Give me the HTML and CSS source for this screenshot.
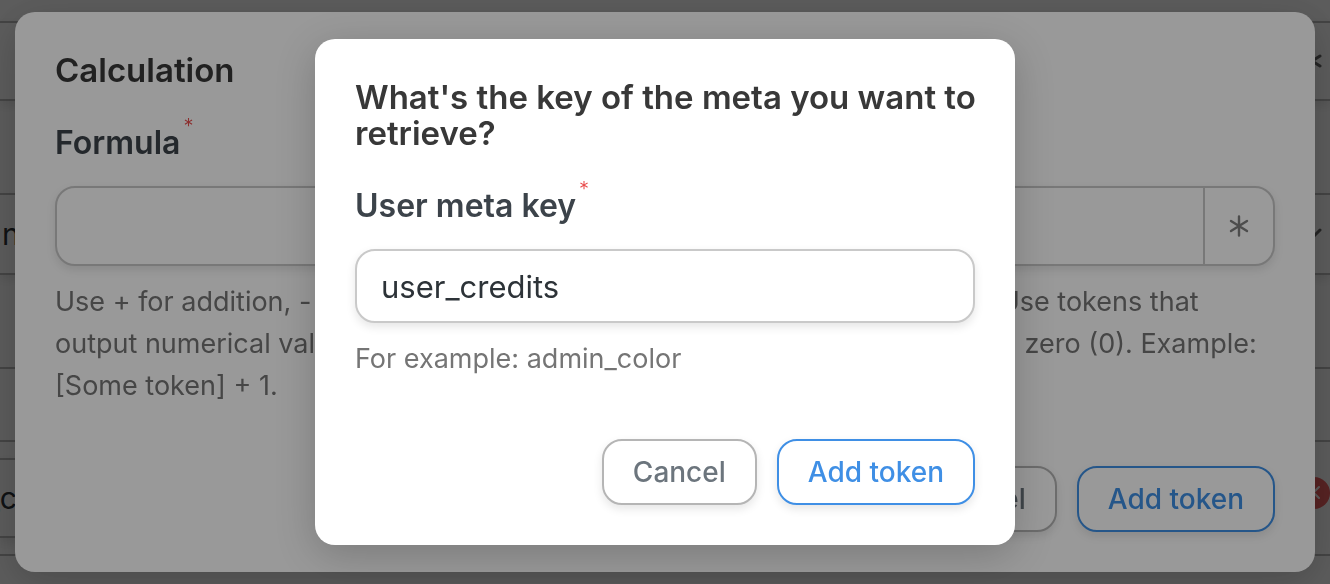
FILE: index.html
```html
<!DOCTYPE html>
<html lang="en">
<head>
	<meta charset="UTF-8">
	<title>Calculation</title>
	<meta name="viewport" content="width=device-width, initial-scale=1.0">
	<link rel="stylesheet" href="styles.css">
</head>
<body>
	<main class="page">
		<div class="page-field">
			<span></span>
			<svg class="page-icon" viewBox="0 0 20 20" aria-hidden="true"><path d="M10 1v18M2 5l16 10M2 15L18 5"/></svg>
		</div>
		<div class="page-field page-select">
			<span>n</span>
			<svg class="page-icon" viewBox="0 0 20 20" aria-hidden="true"><path d="M2 6l8 8 8-8"/></svg>
		</div>
		<div class="page-section"></div>
		<div class="page-row">
			<div class="page-value">_c</div>
			<button class="remove" type="button" aria-label="Remove">
				<svg viewBox="0 0 32 32" aria-hidden="true"><path d="M10 10l11 11M21 10L10 21"/></svg>
			</button>
		</div>
	</main>

	<div class="overlay">
		<section class="modal modal-large" role="dialog" aria-labelledby="calc-title">
			<h2 class="modal-title" id="calc-title">Calculation</h2>
			<label class="label" for="formula">Formula <span class="required">*</span></label>
			<div class="token-field">
				<input class="token-input" id="formula" type="text">
				<button class="token-button" type="button" aria-label="Insert token">
					<svg viewBox="0 0 20 22" aria-hidden="true"><path d="M10 1.500v19M2 6l16 10M2 16L18 6"/></svg>
				</button>
			</div>
			<p class="help">Use + for addition, - for subtraction, * for multiplication, and / for division. Use tokens that output numerical values. Any non-numeric values will also be replaced with zero (0). Example: [Some token] + 1.</p>
			<div class="actions">
				<button class="button" type="button">Cancel</button>
				<button class="button button-primary" type="button">Add token</button>
			</div>
		</section>
	</div>

	<div class="overlay">
		<section class="modal" role="dialog" aria-labelledby="meta-title">
			<h2 class="modal-title" id="meta-title">What's the key of the meta you want to retrieve?</h2>
			<label class="label" for="meta-key">User meta key <span class="required">*</span></label>
			<input class="input" id="meta-key" type="text" value="user_credits">
			<p class="help">For example: admin_color</p>
			<div class="actions">
				<button class="button" type="button">Cancel</button>
				<button class="button button-primary" type="button">Add token</button>
			</div>
		</section>
	</div>
</body>
</html>
```
FILE: styles.css
```css
html{
	box-sizing: border-box;
	font-family: Inter, "Liberation Sans", sans-serif;
	font-size: 16px;
}
*,
*:before,
*:after{
	box-sizing: inherit;
}

body{
	margin: 0;
	min-height: 100vh;
	overflow: hidden;
	background-color: #fff;
}
button,
input{
	font-family: inherit;
	margin: 0;
}
svg{
	fill: none;
	stroke: currentColor;
	stroke-width: 2;
	stroke-linecap: round;
	stroke-linejoin: round;
}

/* page behind the dialogs */
.page{
	padding-top: 21px;
	font-size: 30px;
	color: #2d3338;
}
.page-field{
	display: flex;
	justify-content: space-between;
	align-items: center;
	height: 80px;
	padding: 0 8px 0 2px;
	border: solid #bbb;
	border-width: 2px 0;
	box-shadow: 0 4px 10px rgba(0,0,0,.1);
}
.page-select{
	height: 82px;
	margin-top: 92px;
}
.page-icon{
	width: 20px;
	height: 20px;
	color: #666;
	stroke-width: 3;
}
.page-section{
	height: 73px;
	margin-top: 92px;
	border-top: 2px solid #bbb;
}
.page-row{
	display: flex;
	align-items: center;
	padding: 16px 0;
	border: solid #bbb;
	border-width: 2px 0;
}
.page-value{
	flex-grow: 1;
	height: 80px;
	margin-right: 30px;
	line-height: 76px;
	text-indent: -14px;
	border: solid #bbb;
	border-width: 2px 0;
	box-shadow: 0 4px 10px rgba(0,0,0,.1);
}
.remove{
	width: 32px;
	height: 32px;
	margin-bottom: 10px;
	padding: 0;
	border: 0;
	border-radius: 50%;
	background-color: #f06060;
	color: #fff;
}
.remove svg{
	display: block;
}

/* dialogs */
.overlay{
	position: fixed;
	inset: 0;
	display: flex;
	justify-content: center;
	align-items: center;
	padding: 0 15px;
	background-color: rgba(0,0,0,.4);
}
.modal{
	width: 100%;
	max-width: 700px;
	padding: 40px;
	border-radius: 20px;
	background-color: #fff;
	box-shadow: 0 10px 40px rgba(0,0,0,.2);
}
.modal-large{
	max-width: 1300px;
}
.modal-title{
	margin: 0 -8px 24px 0;
	font-size: 33px;
	font-weight: 600;
	line-height: 36px;
	color: #383838;
}
.label{
	display: flex;
	align-items: flex-start;
	gap: 3px;
	margin-bottom: 12px;
	font-size: 32px;
	font-weight: 600;
	line-height: 62px;
	color: #3c434a;
}
.required{
	font-size: 20px;
	font-weight: 300;
	line-height: 28px;
	color: #e94b4b;
}
.input,
.token-field{
	width: 100%;
	border: 2px solid #c9c9c9;
	border-radius: 20px;
	background-color: #fff;
	box-shadow: 0 4px 10px rgba(0,0,0,.1);
}
.input{
	display: block;
	height: 74px;
	padding: 0 24px;
	font-size: 31px;
	color: #2d3338;
}
.token-field{
	display: flex;
	height: 80px;
	overflow: hidden;
}
.token-input{
	flex-grow: 1;
	border: 0;
	background: none;
	padding: 0 24px;
	font-size: 31px;
}
.token-button{
	display: flex;
	justify-content: center;
	align-items: center;
	width: 70px;
	padding: 0;
	border: 0;
	border-left: 2px solid #c9c9c9;
	background: none;
	color: #808080;
}
.token-button svg{
	width: 20px;
	height: 22px;
	stroke-width: 2.4;
}
.help{
	margin: 15px 0 59px;
	font-size: 27px;
	line-height: 42px;
	color: #757575;
}
.actions{
	display: flex;
	justify-content: flex-end;
	gap: 20px;
}
.button{
	height: 66px;
	padding: 0 29px;
	border: 2px solid #b5b5b5;
	border-radius: 20px;
	background-color: #fff;
	box-shadow: 0 4px 10px rgba(0,0,0,.1);
	font-size: 28px;
	font-weight: 500;
	color: #6c757d;
}
.button-primary{
	border-color: #3f8fe5;
	color: #3f8fe5;
}
```
